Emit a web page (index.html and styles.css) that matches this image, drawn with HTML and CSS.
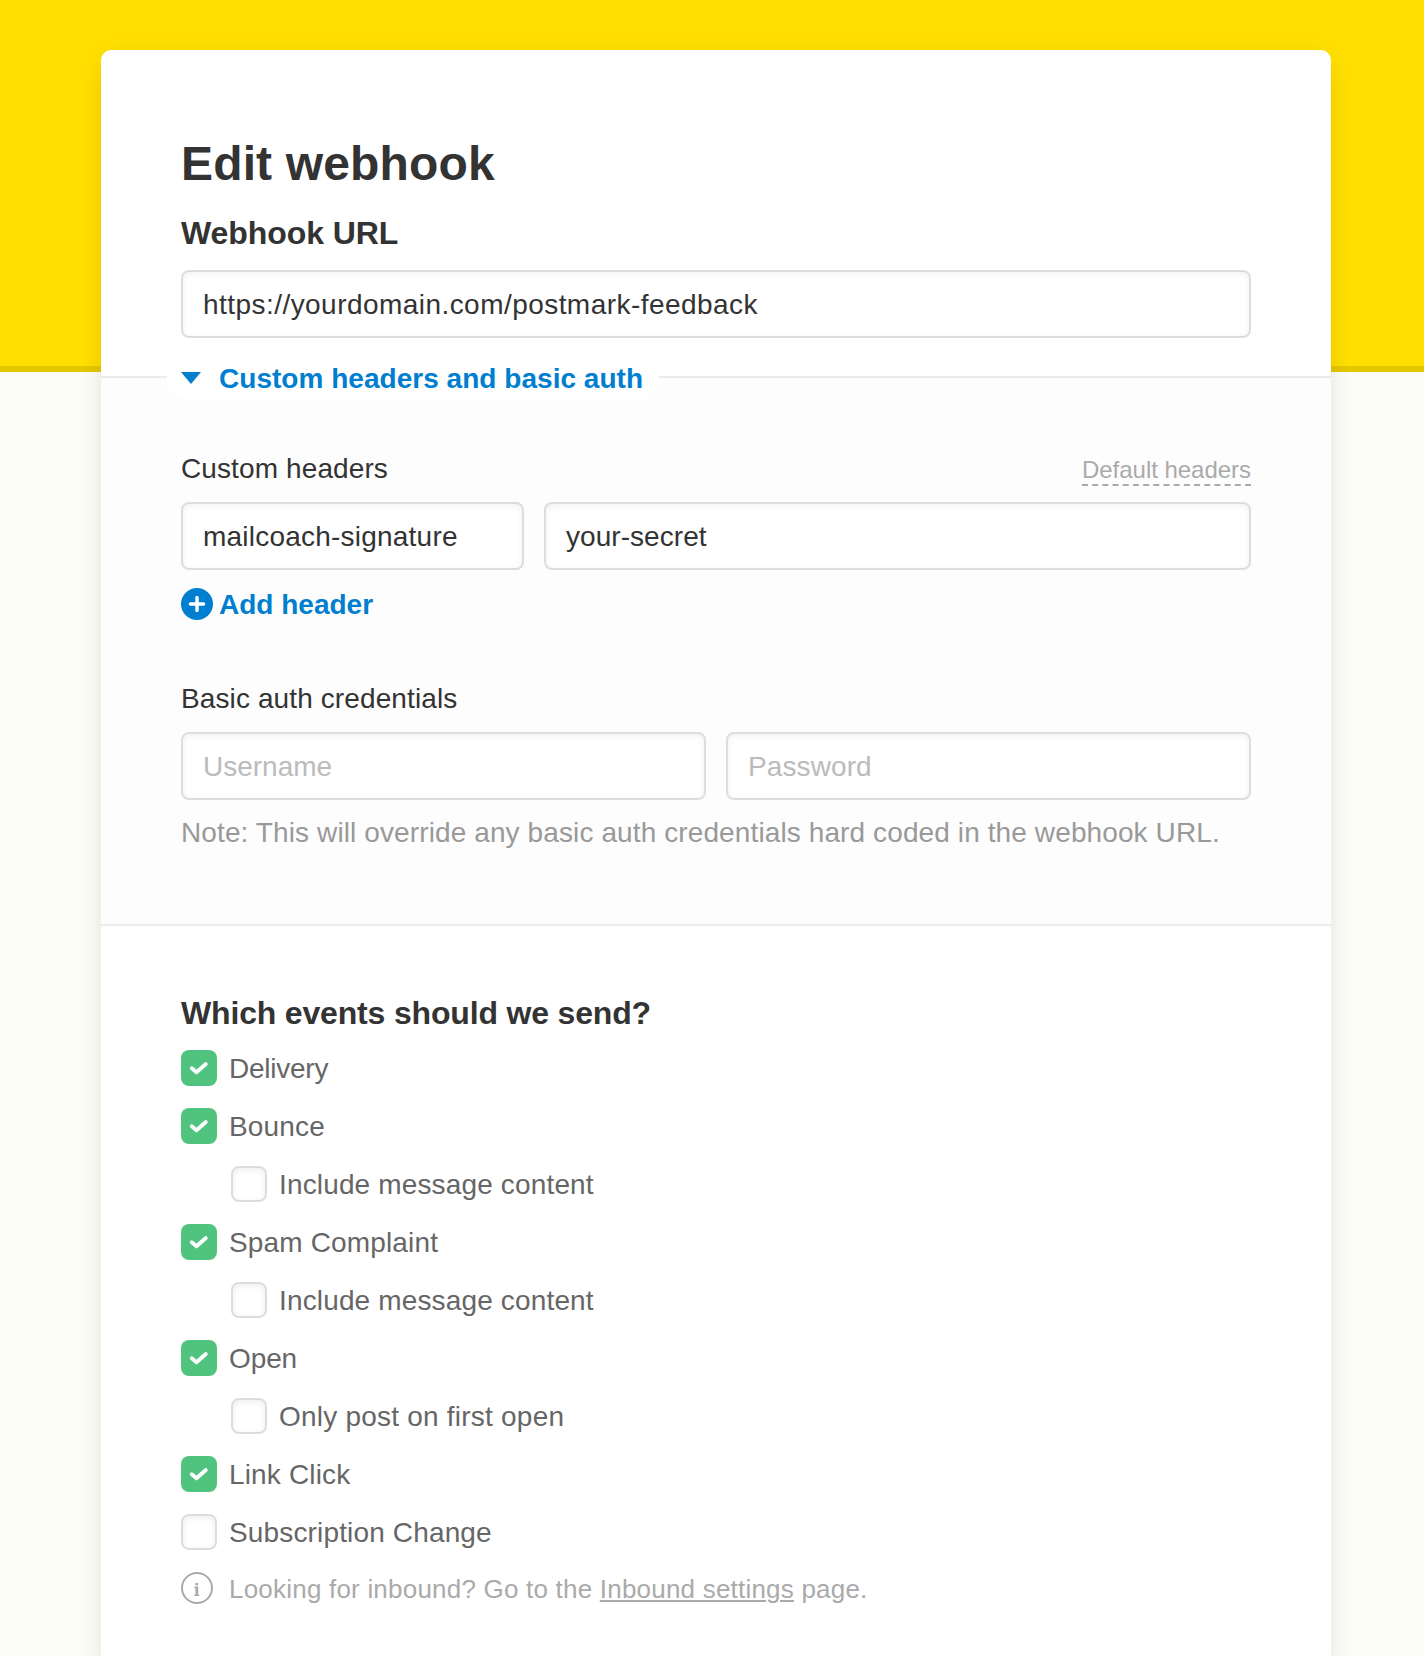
FILE: index.html
```html
<!DOCTYPE html>
<html lang="en">
<head>
<meta charset="utf-8">
<title>Edit webhook</title>
<link rel="stylesheet" href="styles.css">
</head>
<body>
<svg class="sprite" aria-hidden="true">
  <symbol id="check" viewBox="0 0 36 36"><path d="M10.8 18.3l4.7 3.9L24.8 14" fill="none" stroke="#fff" stroke-width="3.8" stroke-linecap="round" stroke-linejoin="round"/></symbol>
</svg>
<main class="card">
  <section class="intro">
    <h1 class="title">Edit webhook</h1>
    <h2 class="subtitle subtitle-url">Webhook URL</h2>
    <input class="field field-url" type="text" value="https://yourdomain.com/postmark-feedback" aria-label="Webhook URL">
  </section>

  <section class="advanced">
    <button class="toggle" type="button">
      <svg class="caret" viewBox="0 0 20 12"><path d="M0 0h20L10 12z" fill="#007ed0"/></svg>
      <span>Custom headers and basic auth</span>
    </button>
    <div class="label-row">
      <span class="label">Custom headers</span>
      <a class="hint">Default headers</a>
    </div>
    <div class="header-fields">
      <input class="field field-name" type="text" value="mailcoach-signature" aria-label="Header name">
      <input class="field field-value" type="text" value="your-secret" aria-label="Header value">
    </div>
    <a class="add">
      <svg class="round-icon" viewBox="0 0 32 32"><circle cx="16" cy="16" r="16" fill="#007ed0"/><path d="M16 9.4v13.2M9.4 16h13.2" stroke="#fff" stroke-width="3.4" stroke-linecap="round"/></svg>
      <span>Add header</span>
    </a>
    <div class="label label-auth">Basic auth credentials</div>
    <div class="auth-fields">
      <input class="field" type="text" placeholder="Username" aria-label="Username">
      <input class="field field-password" type="password" placeholder="Password" aria-label="Password">
    </div>
    <p class="note">Note: This will override any basic auth credentials hard coded in the webhook URL.</p>
  </section>

  <section class="events">
    <h2 class="subtitle subtitle-events">Which events should we send?</h2>
    <div class="options">
      <div class="option"><span class="box checked"><svg><use href="#check"/></svg></span><span class="delivery">Delivery</span></div>
      <div class="option"><span class="box checked"><svg><use href="#check"/></svg></span><span>Bounce</span></div>
      <div class="option nested"><span class="box"></span><span>Include message content</span></div>
      <div class="option"><span class="box checked"><svg><use href="#check"/></svg></span><span>Spam Complaint</span></div>
      <div class="option nested"><span class="box"></span><span>Include message content</span></div>
      <div class="option"><span class="box checked"><svg><use href="#check"/></svg></span><span class="open">Open</span></div>
      <div class="option nested"><span class="box"></span><span class="first-open">Only post on first open</span></div>
      <div class="option"><span class="box checked"><svg><use href="#check"/></svg></span><span>Link Click</span></div>
      <div class="option"><span class="box"></span><span>Subscription Change</span></div>
      <div class="info">
        <svg class="round-icon" viewBox="0 0 32 32"><circle cx="16" cy="16" r="15" fill="none" stroke="#aaa" stroke-width="2"/><path d="M14.3 11h2.8v2.2h-2.8zM13.4 14.6h3.8v7.8h.9V24h-4.7v-1.6h1v-6.2h-1z" fill="#aaa"/></svg>
        <span>Looking for inbound? Go to the <a class="link">Inbound settings</a> page.</span>
      </div>
    </div>
  </section>
</main>
</body>
</html>
```
FILE: styles.css
```css
* { box-sizing: border-box; }

body {
  margin: 0;
  height: 1656px;
  padding: 50px 93px 0 101px;
  background: linear-gradient(#ffde00 0 366px, #e5c700 366px 372px, #fbfcf5 372px) no-repeat;
  color: #333;
  font: 28px/36px "Liberation Sans", Arial, sans-serif;
  letter-spacing: 0.11px;
}

.sprite { display: none; }
svg { display: block; }

.card {
  height: 1606px;
  background: #fff;
  border-radius: 10px 10px 0 0;
  box-shadow: 0 4px 24px rgba(0, 0, 0, 0.05), 0 24px 24px rgba(0, 0, 0, 0.05);
  clip-path: inset(-50px -93px 0 -101px);
}

.intro { padding: 86px 80px 38px; }

.title {
  margin: 0 0 21px;
  font-size: 48px;
  line-height: 56px;
  letter-spacing: 0.15px;
}

.subtitle {
  margin: 0 0 17px;
  font-size: 32px;
  line-height: 40px;
}
.subtitle-url { letter-spacing: -0.08px; }
.subtitle-events { letter-spacing: -0.17px; }

.field {
  display: block;
  width: 100%;
  height: 68px;
  padding: 2px 20px 0;
  border: 2px solid #ddd;
  border-radius: 8px;
  background: #fff;
  box-shadow: inset 0 2px 6px rgba(0, 0, 0, 0.06);
  color: #333;
  font: inherit;
  letter-spacing: 0;
}
.field::placeholder { color: #bbb; opacity: 1; }
.field-url { letter-spacing: 0.45px; }
.field-name { letter-spacing: 0.22px; }
.field-value { letter-spacing: 0.05px; }
.field-password { letter-spacing: 0.1px; }

.advanced {
  padding: 0 80px 73px;
  border-top: 2px solid #ebebeb;
  border-bottom: 2px solid #ebebeb;
  background: #fdfdfd;
}

.toggle {
  display: flex;
  align-items: center;
  gap: 18px;
  width: 492px;
  height: 44px;
  margin: -22px 0 50px -14px;
  padding: 2px 0 0 14px;
  border: 0;
  border-radius: 0 0 22px 22px;
  background: #fff;
  color: #007ed0;
  font: bold 28px/42px "Liberation Sans", Arial, sans-serif;
  letter-spacing: 0.03px;
  white-space: nowrap;
}
.caret { width: 20px; height: 12px; margin-bottom: 2px; }

.label { line-height: 38px; }

.label-row {
  display: flex;
  justify-content: space-between;
  align-items: flex-start;
  height: 36px;
  margin-bottom: 16px;
}

.hint {
  margin-top: 6px;
  border-bottom: 2px dashed #aaa;
  color: #aaa;
  font-size: 24px;
  line-height: 28px;
  letter-spacing: -0.03px;
}

.header-fields {
  display: grid;
  grid-template-columns: 343px 1fr;
  gap: 20px;
}

.add {
  display: flex;
  gap: 6px;
  height: 32px;
  margin: 18px 0 60px;
  color: #007ed0;
  font-weight: bold;
  line-height: 34px;
  letter-spacing: 0;
}
.round-icon { width: 32px; height: 32px; flex: none; }

.label-auth { margin-bottom: 14px; }

.auth-fields {
  display: grid;
  grid-template-columns: 1fr 1fr;
  gap: 20px;
}

.note { margin: 15px 0 0; color: #999; white-space: nowrap; }

.events { padding: 67px 80px 0; color: #666; }
.events .subtitle { color: #333; }

.options { display: flex; flex-direction: column; gap: 22px; }
.option {
  display: flex;
  gap: 12px;
  height: 36px;
  line-height: 38px;
  letter-spacing: 0.15px;
}
.nested { padding-left: 50px; }
.delivery { letter-spacing: -0.25px; }
.open { letter-spacing: -0.1px; }
.first-open { letter-spacing: 0.22px; }

.box {
  width: 36px;
  height: 36px;
  border: 2px solid #ddd;
  border-radius: 8px;
  background: #fff;
  box-shadow: inset 0 2px 6px rgba(0, 0, 0, 0.07);
}
.box.checked { border: 0; background: #50c47f; box-shadow: none; }
.box svg { width: 36px; height: 36px; }

.info {
  display: flex;
  gap: 16px;
  height: 32px;
  color: #aaa;
  font-size: 26px;
  line-height: 34px;
  letter-spacing: 0.21px;
}
.link {
  text-decoration: underline;
  text-decoration-thickness: 2px;
  text-underline-offset: 2px;
}
```
